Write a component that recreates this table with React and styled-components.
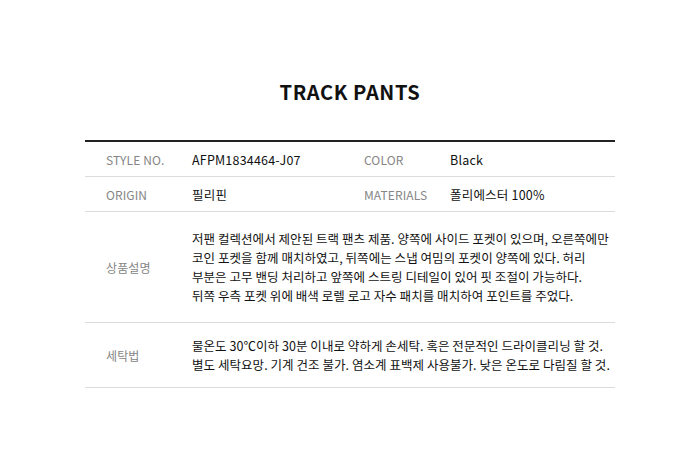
import React from "react";
import styled, { createGlobalStyle } from "styled-components";

const Global = createGlobalStyle`
  html, body { margin: 0; padding: 0; background: #fff; }
  body { font-family: "Noto Sans CJK KR", "Noto Sans", sans-serif; color: #111; }
`;

const Page = styled.div`
  width: 700px;
  display: flex;
  flex-direction: column;
  align-items: center;
  padding-top: 77px;
`;

const Title = styled.h1`
  margin: 0 0 34px;
  font-size: 20px;
  line-height: 29px;
  font-weight: 700;
  letter-spacing: 0.6px;
  color: #111;
`;

const Table = styled.div`
  width: 530px;
  border-top: 2px solid #222;
`;

const Row = styled.div`
  display: grid;
  grid-template-columns: 107px 151px 107px 1fr;
  align-items: center;
  min-height: ${(p) => p.$h}px;
  border-bottom: 1px solid #dcdcdc;
  box-sizing: border-box;
`;

const Label = styled.div`
  padding-left: 21px;
  font-size: 12px;
  color: #858585;
  letter-spacing: 0.1px;
`;

const Value = styled.div`
  font-size: 12.5px;
  color: #111;
  letter-spacing: 0.2px;
`;

const Desc = styled.div`
  grid-column: 2 / 5;
  font-size: 12.5px;
  line-height: 19px;
  color: #111;
  padding: ${(p) => p.$pad}px 0;
  letter-spacing: 0.05px;
  white-space: nowrap;
`;

export default function App() {
  return (
    <>
      <Global />
      <Page>
        <Title>TRACK PANTS</Title>
        <Table>
          <Row $h={35}>
            <Label>STYLE NO.</Label>
            <Value>AFPM1834464-J07</Value>
            <Label>COLOR</Label>
            <Value>Black</Value>
          </Row>
          <Row $h={35}>
            <Label>ORIGIN</Label>
            <Value>필리핀</Value>
            <Label>MATERIALS</Label>
            <Value>폴리에스터 100%</Value>
          </Row>
          <Row $h={111}>
            <Label>상품설명</Label>
            <Desc $pad={17}>
              저팬 컬렉션에서 제안된 트랙 팬츠 제품. 양쪽에 사이드 포켓이 있으며, 오른쪽에만
              <br />
              코인 포켓을 함께 매치하였고, 뒤쪽에는 스냅 여밈의 포켓이 양쪽에 있다. 허리
              <br />
              부분은 고무 밴딩 처리하고 앞쪽에 스트링 디테일이 있어 핏 조절이 가능하다.
              <br />
              뒤쪽 우측 포켓 위에 배색 로렐 로고 자수 패치를 매치하여 포인트를 주었다.
            </Desc>
          </Row>
          <Row $h={64}>
            <Label>세탁법</Label>
            <Desc $pad={13}>
              물온도 30℃이하 30분 이내로 약하게 손세탁. 혹은 전문적인 드라이클리닝 할 것.
              <br />
              별도 세탁요망. 기계 건조 불가. 염소계 표백제 사용불가. 낮은 온도로 다림질 할 것.
            </Desc>
          </Row>
        </Table>
      </Page>
    </>
  );
}
